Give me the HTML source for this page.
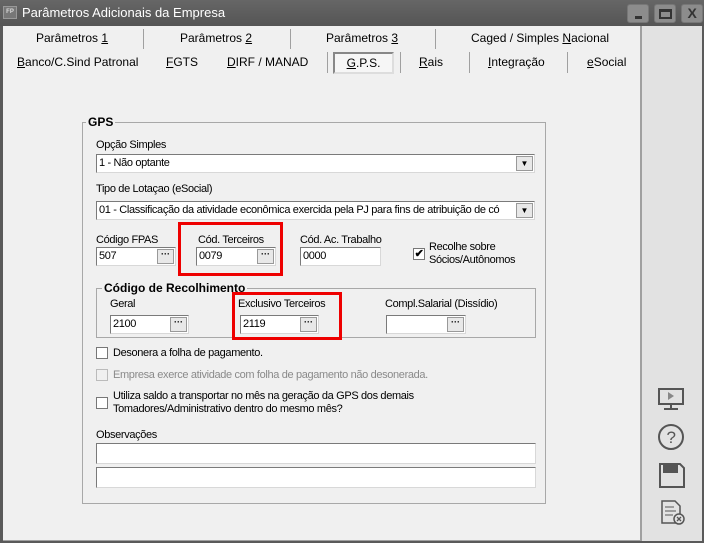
<!DOCTYPE html>
<html><head><meta charset="utf-8"><style>
*{margin:0;padding:0;box-sizing:border-box}
body{width:704px;height:543px;overflow:hidden;background:#5a5a5a;font-family:"Liberation Sans",sans-serif;font-size:11px;color:#000;position:relative;letter-spacing:-0.35px}
.a{position:absolute;white-space:nowrap}
.title{left:0;top:0;width:704px;height:26px;background:linear-gradient(#666,#555)}
.wb{position:absolute;top:4px;width:22px;height:19px;background:#8c8c8c;border-radius:3px;border:1px solid #777}
.main{left:3px;top:26px;width:638px;height:515px;background:#f0f0f0}
.side{left:641px;top:26px;width:61px;height:515px;background:#e2e2e2;border-left:1px solid #a0a0a0}
.tab{font-size:12px;color:#000;letter-spacing:0}
.sep{position:absolute;width:1px;background:#a0a0a0}
.fld{position:absolute;background:#fff;border:1px solid #7a7a7a;border-right-color:#d8d8d8;border-bottom-color:#d8d8d8;height:19px;padding-left:2px;line-height:17px;overflow:hidden;white-space:nowrap}
.btn{position:absolute;right:1px;top:1px;width:17px;height:15px;background:#e8e8e8;border:1px solid #999;font-weight:bold;font-size:9px;line-height:9px;text-align:center;letter-spacing:0}
.grp{position:absolute;border:1px solid #a8a8a8}
.gl{position:absolute;background:#f0f0f0;font-weight:bold;font-size:12px;padding:0 2px;letter-spacing:0}
.cb{position:absolute;width:12px;height:12px;background:#fff;border:1px solid #777}
.red{position:absolute;border:3px solid #e00}
u{text-decoration:underline}
</style></head><body>
<div class="a title"></div>
<div class="a" style="left:3px;top:6px;width:14px;height:13px;background:#777;border:1px solid #999;color:#ddd;font-size:6px;line-height:11px;text-align:center;font-weight:bold;letter-spacing:0">FP</div>
<div class="a" style="left:22px;top:5px;color:#fff;font-size:13px;letter-spacing:0">Parâmetros Adicionais da Empresa</div>
<div class="wb" style="left:627px"><div style="position:absolute;left:7px;top:11px;width:7px;height:3px;background:#333"></div></div>
<div class="wb" style="left:654px"><div style="position:absolute;left:4px;top:4px;width:13px;height:10px;border:2px solid #333;border-top-width:3px"></div></div>
<div class="wb" style="left:681px;color:#333;font-weight:bold;font-size:14px;text-align:center;line-height:17px">X</div>

<div class="a main"></div>
<div class="a side"></div>

<div class="a tab" style="left:36px;top:31px">Parâmetros <u>1</u></div>
<div class="sep" style="left:143px;top:29px;height:20px"></div>
<div class="a tab" style="left:180px;top:31px">Parâmetros <u>2</u></div>
<div class="sep" style="left:290px;top:29px;height:20px"></div>
<div class="a tab" style="left:326px;top:31px">Parâmetros <u>3</u></div>
<div class="sep" style="left:435px;top:29px;height:20px"></div>
<div class="a tab" style="left:471px;top:31px">Caged / Simples <u>N</u>acional</div>
<div class="sep" style="left:640px;top:26px;height:515px"></div>

<div class="a tab" style="left:17px;top:55px"><u>B</u>anco/C.Sind Patronal</div>
<div class="a tab" style="left:166px;top:55px"><u>F</u>GTS</div>
<div class="a tab" style="left:227px;top:55px"><u>D</u>IRF / MANAD</div>
<div class="sep" style="left:327px;top:52px;height:21px"></div>
<div class="a tab" style="left:333px;top:52px;width:61px;height:22px;border:2px solid #888;border-right-color:#ddd;border-bottom-color:#ddd;background:#f6f6f6;text-align:center;line-height:18px"><u>G</u>.P.S.</div>
<div class="sep" style="left:400px;top:52px;height:21px"></div>
<div class="a tab" style="left:419px;top:55px"><u>R</u>ais</div>
<div class="sep" style="left:469px;top:52px;height:21px"></div>
<div class="a tab" style="left:488px;top:55px"><u>I</u>ntegração</div>
<div class="sep" style="left:567px;top:52px;height:21px"></div>
<div class="a tab" style="left:587px;top:55px"><u>e</u>Social</div>

<div class="grp" style="left:82px;top:122px;width:464px;height:382px"></div>
<div class="gl" style="left:86px;top:115px">GPS</div>

<div class="a" style="left:96px;top:139px">Opção Simples</div>
<div class="fld" style="left:96px;top:154px;width:439px">1 - Não optante<div class="btn" style="font-size:8px;line-height:13px">▼</div></div>
<div class="a" style="left:96px;top:183px">Tipo de Lotaçao (eSocial)</div>
<div class="fld" style="left:96px;top:201px;width:439px;padding-right:20px">01 - Classificação da atividade econômica exercida pela PJ para fins de atribuição de có<div class="btn" style="font-size:8px;line-height:13px">▼</div></div>

<div class="a" style="left:96px;top:234px">Código FPAS</div>
<div class="fld" style="left:96px;top:247px;width:80px">507<div class="btn">···</div></div>
<div class="a" style="left:198px;top:234px">Cód. Terceiros</div>
<div class="fld" style="left:196px;top:247px;width:80px">0079<div class="btn">···</div></div>
<div class="red" style="left:178px;top:222px;width:105px;height:54px"></div>
<div class="a" style="left:300px;top:234px">Cód. Ac. Trabalho</div>
<div class="fld" style="left:300px;top:247px;width:81px">0000</div>
<div class="cb" style="left:413px;top:248px;font-size:11px;line-height:10px;text-align:center;font-weight:bold">✔</div>
<div class="a" style="left:429px;top:241px;line-height:13px">Recolhe sobre<br>Sócios/Autônomos</div>

<div class="grp" style="left:96px;top:288px;width:440px;height:50px"></div>
<div class="gl" style="left:102px;top:281px">Código de Recolhimento</div>
<div class="a" style="left:110px;top:298px">Geral</div>
<div class="fld" style="left:110px;top:315px;width:79px">2100<div class="btn">···</div></div>
<div class="a" style="left:238px;top:298px">Exclusivo Terceiros</div>
<div class="fld" style="left:240px;top:315px;width:79px">2119<div class="btn">···</div></div>
<div class="red" style="left:232px;top:292px;width:110px;height:48px"></div>
<div class="a" style="left:385px;top:298px">Compl.Salarial (Dissídio)</div>
<div class="fld" style="left:386px;top:315px;width:80px"><div class="btn">···</div></div>

<div class="cb" style="left:96px;top:347px"></div>
<div class="a" style="left:113px;top:347px">Desonera a folha de pagamento.</div>
<div class="cb" style="left:96px;top:369px;background:#f0f0f0;border-color:#bbb"></div>
<div class="a" style="left:113px;top:369px;color:#8a8a8a">Empresa exerce atividade com folha de pagamento não desonerada.</div>
<div class="cb" style="left:96px;top:397px"></div>
<div class="a" style="left:113px;top:390px;line-height:13px">Utiliza saldo a transportar no mês na geração da GPS dos demais<br>Tomadores/Administrativo dentro do mesmo mês?</div>

<div class="a" style="left:96px;top:429px">Observações</div>
<div class="fld" style="left:96px;top:443px;width:440px;height:21px"></div>
<div class="fld" style="left:96px;top:467px;width:440px;height:21px"></div>

<div class="a" style="left:3px;top:540px;width:638px;height:1px;background:#a0a0a0"></div>

<svg class="a" style="left:655px;top:385px" width="34" height="145" viewBox="0 0 34 145" fill="none" stroke="#555" stroke-width="2">
<rect x="4" y="4" width="24" height="15"/><path d="M16 19v4M9 24h14"/><path d="M13 7l6 4-6 4z" fill="#888" stroke="none"/>
<circle cx="16" cy="52" r="12"/><text x="16" y="58" font-family="Liberation Sans" font-size="17" fill="#555" stroke="none" text-anchor="middle">?</text>
<path d="M5 79h20l4 4v19H5z"/><rect x="9" y="79" width="13" height="8" fill="#555"/>
<path d="M7 116h13l5 5v17H7z" stroke-width="1.5"/><path d="M10 122h9M10 126h11M10 130h8" stroke-width="1"/><circle cx="24" cy="134" r="5" fill="#e2e2e2" stroke-width="1.5"/><path d="M22 132l4 4M26 132l-4 4" stroke-width="1.3"/>
</svg>
</body></html>
